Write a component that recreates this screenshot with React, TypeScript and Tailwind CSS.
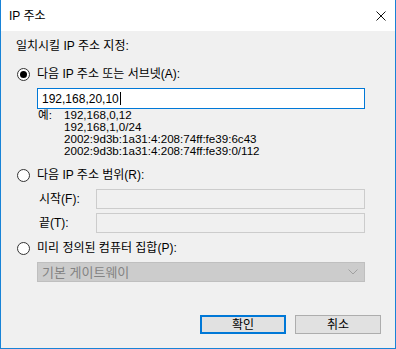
const FONT = "font-['Liberation_Sans','Noto_Sans_CJK_KR',sans-serif]";

const Radio = ({ checked }: { checked?: boolean }) => (
  <span className="w-[13px] h-[13px] rounded-full border border-[#333333] bg-white flex items-center justify-center shrink-0">
    {checked && <span className="w-[7px] h-[7px] rounded-full bg-[#000000]" />}
  </span>
);

export default function App() {
  return (
    <div className={`w-[396px] h-[349px] bg-[#f0f0f0] border-x border-b border-[#1883d7] flex flex-col text-[12px] text-black ${FONT}`}>
      {/* Title bar */}
      <div className="h-[31px] bg-white flex items-center justify-between pl-[8px] pr-[9px] shrink-0">
        <span className="leading-none">IP 주소</span>
        <svg width="10" height="10" viewBox="0 0 10 10">
          <path d="M0.5 0.5 L9.5 9.5 M9.5 0.5 L0.5 9.5" stroke="#111" strokeWidth="1" />
        </svg>
      </div>

      <div className="flex flex-col pl-[15px]">
        {/* Heading */}
        <div className="h-[16px] mt-[7px] flex items-center leading-none">일치시킬 IP 주소 지정:</div>

        {/* Option 1 */}
        <div className="h-[16px] mt-[12px] flex items-center gap-[7px] ml-[1px]">
          <Radio checked />
          <span className="leading-none">다음 IP 주소 또는 서브넷(A):</span>
        </div>
        <div className="ml-[21px] mt-[6px] w-[328px] h-[21px] bg-white border border-[#0078d7] flex items-center pl-[4px] leading-none">
          192,168,20,10<span className="w-px h-[13px] bg-black ml-px" />
        </div>
        <div className="ml-[22px] flex text-[11.6px] leading-[12px]">
          <span className="w-[26px]">예:</span>
          <div className="flex flex-col">
            <span>192,168,0,12</span>
            <span>192,168,1,0/24</span>
            <span>2002:9d3b:1a31:4:208:74ff:fe39:6c43</span>
            <span>2002:9d3b:1a31:4:208:74ff:fe39:0/112</span>
          </div>
        </div>

        {/* Option 2 */}
        <div className="h-[16px] mt-[10px] flex items-center gap-[7px] ml-[1px]">
          <Radio />
          <span className="leading-none">다음 IP 주소 범위(R):</span>
        </div>
        <div className="mt-[6px] flex items-center">
          <span className="w-[80px] pl-[23px] leading-none">시작(F):</span>
          <div className="w-[269px] h-[20px] border border-[#cccccc] bg-[#f0f0f0]" />
        </div>
        <div className="mt-[4px] flex items-center">
          <span className="w-[80px] pl-[23px] leading-none">끝(T):</span>
          <div className="w-[269px] h-[20px] border border-[#cccccc] bg-[#f0f0f0]" />
        </div>

        {/* Option 3 */}
        <div className="h-[16px] mt-[7px] flex items-center gap-[7px] ml-[1px]">
          <Radio />
          <span className="leading-none">미리 정의된 컴퓨터 집합(P):</span>
        </div>
        <div className="ml-[21px] mt-[6px] w-[328px] h-[20px] bg-[#cccccc] border border-[#bfbfbf] flex items-center justify-between pl-[4px] pr-[6px]">
          <span className="text-[13px] text-[#838383] leading-none">기본 게이트웨이</span>
          <svg width="10" height="6" viewBox="0 0 10 6">
            <path d="M0.5 0.5 L5 5 L9.5 0.5" stroke="#a0a0a0" fill="none" strokeWidth="1" />
          </svg>
        </div>
      </div>

      {/* Buttons */}
      <div className="mt-[33px] flex gap-[9px] pl-[199px]">
        <button className="w-[86px] h-[19px] border-2 border-[#0078d7] bg-[#e1e1e1] flex items-center justify-center leading-none">확인</button>
        <button className="w-[86px] h-[19px] border border-[#adadad] bg-[#e1e1e1] flex items-center justify-center leading-none">취소</button>
      </div>
    </div>
  );
}
